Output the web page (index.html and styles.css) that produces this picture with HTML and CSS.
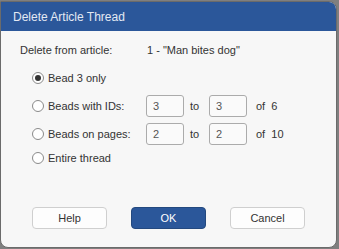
FILE: index.html
```html
<!DOCTYPE html>
<html lang="en">
<head>
  <meta charset="UTF-8">
  <title>Delete Article Thread</title>
  <link rel="stylesheet" href="styles.css">
</head>
<body>
  <div class="window">
    <div class="titlebar">Delete Article Thread</div>

    <div class="content">
      <div class="article-row">
        <span class="article-label">Delete from article:</span>
        <span>1 - "Man bites dog"</span>
      </div>

      <div class="options">
        <label class="option">
          <span class="radio checked"></span>
          <span class="option-label">Bead 3 only</span>
        </label>

        <div class="option range">
          <span class="radio"></span>
          <span class="option-label">Beads with IDs:</span>
          <span class="field">3</span>
          <span class="to">to</span>
          <span class="field">3</span>
          <span class="of">of&nbsp;&nbsp;6</span>
        </div>

        <div class="option range">
          <span class="radio"></span>
          <span class="option-label">Beads on pages:</span>
          <span class="field">2</span>
          <span class="to">to</span>
          <span class="field">2</span>
          <span class="of">of&nbsp;&nbsp;10</span>
        </div>

        <label class="option last">
          <span class="radio"></span>
          <span class="option-label">Entire thread</span>
        </label>
      </div>

      <div class="buttons">
        <button class="btn">Help</button>
        <button class="btn primary">OK</button>
        <button class="btn">Cancel</button>
      </div>
    </div>
  </div>
</body>
</html>
```

FILE: styles.css
```css
* {
  margin: 0;
  padding: 0;
  box-sizing: border-box;
}

body {
  font-family: "Liberation Sans", Arial, sans-serif;
  font-size: 11px;
  color: #333333;
  background: #7f7f7f;
  width: 339px;
  height: 249px;
  overflow: hidden;
}

.window {
  margin-top: 1px;
  width: 337px;
  height: 247px;
  border: 1px solid #6b6b6b;
  border-radius: 0 8px 8px 8px;
  background: #f7f7f7;
  overflow: hidden;
  display: flex;
  flex-direction: column;
}

.titlebar {
  height: 29px;
  flex-shrink: 0;
  background: #2b579a;
  color: #e3e9f3;
  font-size: 12px;
  padding-left: 12px;
  display: flex;
  align-items: center;
}

.content {
  flex: 1;
  padding: 10px 0 0 19px;
  display: flex;
  flex-direction: column;
}

.article-row {
  height: 18px;
  display: flex;
  align-items: center;
}

.article-label {
  width: 127px;
}

.options {
  margin-top: 8px;
  padding-left: 12px;
  display: flex;
  flex-direction: column;
  gap: 6px;
}

.option {
  height: 22px;
  display: flex;
  align-items: center;
}

.option.last {
  margin-top: -4px;
}

.radio {
  width: 12px;
  height: 12px;
  border: 1px solid #8a8a8a;
  border-radius: 50%;
  background: #ffffff;
  margin-right: 4px;
  flex-shrink: 0;
  display: flex;
  align-items: center;
  justify-content: center;
}

.radio.checked::after {
  content: "";
  width: 6px;
  height: 6px;
  border-radius: 50%;
  background: #333333;
}

.range .option-label {
  width: 98px;
}

.field {
  width: 38px;
  height: 22px;
  border: 1px solid #ababab;
  border-radius: 3px;
  background: #fafafa;
  color: #555555;
  padding-left: 6px;
  display: flex;
  align-items: center;
}

.to {
  width: 25px;
  padding-left: 6px;
}

.of {
  padding-left: 9px;
}

.buttons {
  margin-top: auto;
  margin-bottom: 18px;
  padding-left: 12px;
  display: flex;
  gap: 24px;
}

.btn {
  width: 75px;
  height: 22px;
  font-family: inherit;
  font-size: 11px;
  color: #333333;
  background: #fdfdfd;
  border: 1px solid #cfcfcf;
  border-radius: 4px;
}

.btn.primary {
  background: #2b579a;
  border-color: #24497f;
  color: #ffffff;
}
```
